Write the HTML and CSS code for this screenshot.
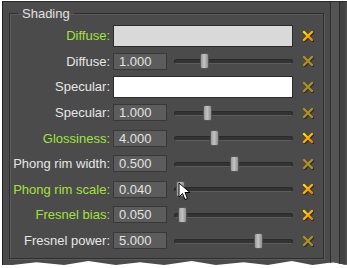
FILE: index.html
```html
<!DOCTYPE html>
<html lang="en">
<head>
  <meta charset="UTF-8" />
  <title>Shading</title>
  <link rel="stylesheet" href="styles.css">
</head>
<body>
  <div class="window">
    <div class="content">
      <fieldset class="group">
        <legend>Shading</legend>

        <!-- Diffuse colour -->
        <label class="lbl changed">Diffuse:</label>
        <div class="ctrl"><div class="swatch light"></div></div>
        <span class="reset on"></span>

        <label class="lbl">Diffuse:</label>
        <div class="ctrl">
          <div class="num">1.000</div>
          <div class="slider"><div class="track"></div><div class="thumb" style="left: 22%"></div></div>
        </div>
        <span class="reset"></span>

        <!-- Specular colour -->
        <label class="lbl">Specular:</label>
        <div class="ctrl"><div class="swatch white"></div></div>
        <span class="reset"></span>

        <label class="lbl">Specular:</label>
        <div class="ctrl">
          <div class="num">1.000</div>
          <div class="slider"><div class="track"></div><div class="thumb" style="left: 24%"></div></div>
        </div>
        <span class="reset"></span>

        <label class="lbl changed">Glossiness:</label>
        <div class="ctrl">
          <div class="num">4.000</div>
          <div class="slider"><div class="track"></div><div class="thumb" style="left: 30%"></div></div>
        </div>
        <span class="reset on"></span>

        <label class="lbl">Phong rim width:</label>
        <div class="ctrl">
          <div class="num">0.500</div>
          <div class="slider"><div class="track"></div><div class="thumb" style="left: 47%"></div></div>
        </div>
        <span class="reset"></span>

        <label class="lbl changed">Phong rim scale:</label>
        <div class="ctrl">
          <div class="num">0.040</div>
          <div class="slider"><div class="track"></div><div class="thumb" style="left: 2%"></div></div>
        </div>
        <span class="reset on"></span>

        <label class="lbl changed">Fresnel bias:</label>
        <div class="ctrl">
          <div class="num">0.050</div>
          <div class="slider"><div class="track"></div><div class="thumb" style="left: 3%"></div></div>
        </div>
        <span class="reset on"></span>

        <label class="lbl">Fresnel power:</label>
        <div class="ctrl">
          <div class="num">5.000</div>
          <div class="slider"><div class="track"></div><div class="thumb" style="left: 67%"></div></div>
        </div>
        <span class="reset"></span>
      </fieldset>
    </div>
    <div class="side"><div class="side-inner"></div></div>
  </div>

  <!-- mouse pointer over the slider -->
  <svg class="cursor" width="14" height="20" viewBox="0 0 14 20">
    <path d="M1 1 L1 15 L4.5 11.5 L7 17.5 L9.5 16.5 L7 10.5 L12 10.5 Z" fill="#fff" stroke="#000" stroke-width="1" stroke-linejoin="miter"/>
  </svg>

  <svg width="0" height="0" style="position:absolute">
    <defs>
      <linearGradient id="xon" x1="0" y1="0" x2="1" y2="1">
        <stop offset="0" stop-color="#ffe600"/>
        <stop offset="1" stop-color="#ff7a00"/>
      </linearGradient>
    </defs>
  </svg>

  <script>
    // draw the X reset icons
    document.querySelectorAll('.reset').forEach(function (el) {
      el.innerHTML =
        '<svg width="12" height="12" viewBox="0 0 12 12">' +
        '<path d="M2 2 L10 10 M10 2 L2 10" stroke="rgba(0,0,0,0.45)" stroke-width="2.6" stroke-linecap="round" transform="translate(0.8,0.8)"/>' +
        '<path d="M2 2 L10 10 M10 2 L2 10" stroke="currentColor" stroke-width="2.4" stroke-linecap="round"/>' +
        '</svg>';
    });
  </script>
</body>
</html>
```

FILE: styles.css
```css
html, body {
  margin: 0;
  padding: 0;
  background: #fff;
}
body {
  font-family: "Liberation Sans", Arial, sans-serif;
  font-size: 13px;
  color: #e4e4e4;
  width: 347px;
  height: 268px;
  overflow: hidden;
  position: relative;
}
.window {
  display: flex;
  margin: 1px 0 0 2px;
  height: 263px;
  background: #4b4b4b;
  border-left: 1px solid #222;
  border-top: 1px solid #2a2a2a;
  clip-path: polygon(0 0, 100% 0, 100% 100%, 96% 99%, 90% 100%, 84% 98.5%, 77% 100%, 70% 99%, 62% 100%, 55% 98.5%, 47% 100%, 40% 99%, 33% 100%, 25% 98.5%, 18% 100%, 10% 99%, 3% 100%, 0 100%);
}
.content {
  width: 325px;
}
.group {
  margin: 4px 0 0 6px;
  padding: 2px 0 0 0;
  width: 313px;
  height: 249px;
  border: 1px solid #2f2f2f;
  box-shadow: inset 1px 1px 0 #5a5a5a, 1px 1px 0 #5a5a5a;
  display: grid;
  grid-template-columns: 100px 180px 1fr;
  grid-auto-rows: 25.6px;
  column-gap: 3px;
  align-items: center;
  align-content: start;
}
.group legend {
  margin-left: 8px;
  padding: 0 4px;
  color: #e0e0e0;
  font-size: 13px;
}
.lbl {
  text-align: right;
  white-space: nowrap;
  color: #e6e6e6;
}
.lbl.changed {
  color: #a3e23c;
}
.ctrl {
  display: flex;
  align-items: center;
  gap: 7px;
}
.swatch {
  width: 178px;
  height: 20px;
  border: 1px solid #2c2c2c;
}
.swatch.light {
  background: #d9d9d9;
}
.swatch.white {
  background: #fff;
}
.num {
  width: 47px;
  height: 15px;
  line-height: 15px;
  padding-left: 5px;
  background: #5c5c5c;
  border: 1px solid #383838;
  color: #e2e2e2;
}
.slider {
  position: relative;
  flex: 1;
  height: 16px;
}
.track {
  position: absolute;
  left: 0;
  right: 0;
  top: 6px;
  height: 3px;
  background: #333;
  border: 1px solid #2a2a2a;
  border-bottom-color: #5c5c5c;
  border-radius: 3px;
}
.thumb {
  position: absolute;
  top: 0;
  width: 7px;
  height: 14px;
  border: 1px solid #555;
  border-radius: 2px;
  background: linear-gradient(to right, #9a9a9a, #c4c4c4 45%, #8e8e8e);
}
.reset {
  display: flex;
  justify-content: center;
  align-items: center;
  color: #b08f25;
  padding-right: 3px;
}
.reset.on {
  color: #ffc400;
}
.reset.on svg path:last-child {
  stroke: url(#xon);
}
.side {
  width: 14px;
  margin-left: 2px;
  border-left: 1px solid #2e2e2e;
  background: #545454;
  display: flex;
  justify-content: flex-end;
}
.side-inner {
  width: 5px;
  border-left: 1px solid #2c2c2c;
  background: #424242;
}
.cursor {
  position: absolute;
  left: 178px;
  top: 182px;
}
```
